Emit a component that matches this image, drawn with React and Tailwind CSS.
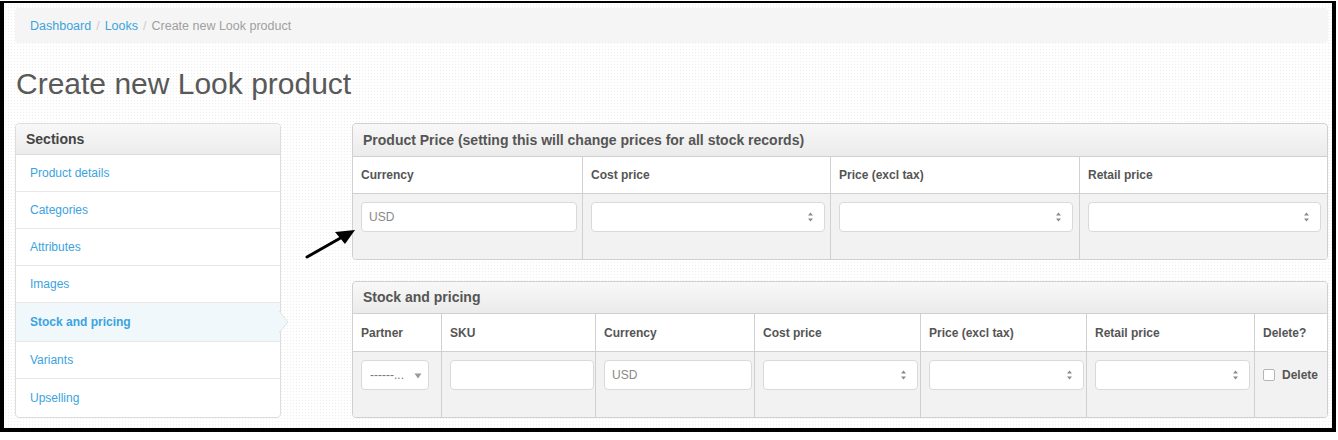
import React from "react";

const FONT = { fontFamily: '"Liberation Sans", Arial, Helvetica, sans-serif' };

function Spinner() {
  return (
    <svg width="7" height="12" viewBox="0 0 7 12" className="absolute right-[10px] top-1/2 -translate-y-1/2">
      <path d="M3.5 1.5 L6 4.5 L1 4.5 Z" fill="#8a8a8a" />
      <path d="M3.5 10.5 L6 7.5 L1 7.5 Z" fill="#8a8a8a" />
    </svg>
  );
}

function TextBox({ value, className = "" }) {
  return (
    <div className={`h-[30px] bg-white border border-[#d9d9d9] rounded-[4px] flex items-center px-[7px] text-[12px] text-[#888] ${className}`}>
      {value}
    </div>
  );
}

function NumberBox({ className = "" }) {
  return (
    <div className={`relative h-[30px] bg-white border border-[#d9d9d9] rounded-[4px] ${className}`}>
      <Spinner />
    </div>
  );
}

function SelectBox() {
  return (
    <div className="relative h-[30px] w-[68px] bg-white border border-[#d9d9d9] rounded-[4px] flex items-center pl-[8px] text-[12px] text-[#777]">
      ------...
      <svg width="8" height="6" viewBox="0 0 8 6" className="absolute right-[6px] top-[12px]">
        <path d="M0.5 0.5 L7.5 0.5 L4 5.5 Z" fill="#9a9a9a" />
      </svg>
    </div>
  );
}

function PanelHeader({ children, h = "h-[33px]" }) {
  return (
    <div className={`${h} flex items-center px-[10px] bg-gradient-to-b from-[#f8f8f8] to-[#ebebeb] border-b border-[#d0d0d0] rounded-t-[4px]`}>
      <span className="text-[14px] font-bold text-[#555]">{children}</span>
    </div>
  );
}

const sections = [
  "Product details",
  "Categories",
  "Attributes",
  "Images",
  "Stock and pricing",
  "Variants",
  "Upselling",
];

export default function App() {
  const priceCols = [
    { label: "Currency", w: "w-[230px]", cell: <TextBox value="USD" className="w-[216px]" /> },
    { label: "Cost price", w: "w-[248px]", cell: <NumberBox className="w-[234px]" /> },
    { label: "Price (excl tax)", w: "w-[249px]", cell: <NumberBox className="w-[234px]" /> },
    { label: "Retail price", w: "flex-1", cell: <NumberBox className="w-[233px]" /> },
  ];

  const stockCols = [
    { label: "Partner", w: "w-[89px]", cell: <SelectBox /> },
    { label: "SKU", w: "w-[154px]", cell: <TextBox value="" className="w-[144px]" /> },
    { label: "Currency", w: "w-[159px]", cell: <TextBox value="USD" className="w-[148px]" /> },
    { label: "Cost price", w: "w-[166px]", cell: <NumberBox className="w-[155px]" /> },
    { label: "Price (excl tax)", w: "w-[166px]", cell: <NumberBox className="w-[155px]" /> },
    { label: "Retail price", w: "w-[168px]", cell: <NumberBox className="w-[155px]" /> },
    {
      label: "Delete?",
      w: "flex-1",
      cell: (
        <div className="h-[30px] flex items-center gap-[7px]">
          <div className="w-[12px] h-[12px] bg-white border border-[#b5b5b5] rounded-[2px]" />
          <span className="text-[12px] font-bold text-[#555]">Delete</span>
        </div>
      ),
    },
  ];

  return (
    <div style={FONT} className="w-[1338px] h-[440px] bg-white pt-[1px]">
      <div className="relative w-[1336px] h-[431px] border-l-4 border-r-4 border-b-4 border-t-2 border-black bg-white bg-[radial-gradient(#eeeeee_0.8px,transparent_0.8px)] bg-[size:3px_3px] pl-[11px] pr-[4px] pt-[5px]">
        {/* breadcrumb */}
        <div className="h-[35px] w-[1313px] bg-[#f5f5f5] rounded-[4px] flex items-center px-[15px] pt-[1px] text-[12.5px]">
          <span className="text-[#3ba3de]">Dashboard</span>
          <span className="text-[#ccc] px-[5px]">/</span>
          <span className="text-[#3ba3de]">Looks</span>
          <span className="text-[#ccc] px-[5px]">/</span>
          <span className="text-[#a0a0a0]">Create new Look product</span>
        </div>

        <h1 className="mt-[21px] ml-[1px] text-[30px] leading-[40px] text-[#595959] font-normal">
          Create new Look product
        </h1>

        <div className="mt-[19px] flex">
          {/* sections nav */}
          <div className="relative w-[266px] border border-[#ddd] rounded-[4px] bg-white">
            <div className="h-[31px] flex items-center px-[10px] bg-gradient-to-b from-[#f8f8f8] to-[#ececec] border-b border-[#ddd] rounded-t-[4px]">
              <span className="text-[14px] font-bold text-[#444]">Sections</span>
            </div>
            {sections.map((s, i) => {
              const active = s === "Stock and pricing";
              return (
                <div
                  key={s}
                  className={`relative flex items-center px-[14px] text-[12px] ${
                    i < sections.length - 1 ? "border-b border-[#e8e8e8]" : ""
                  } ${active ? "h-[39px] bg-[#f1f8fc] font-bold" : "h-[37px]"}`}
                >
                  <span className="text-[#3ba3de]">{s}</span>
                  {active && (
                    <svg width="10" height="22" viewBox="0 0 10 22" className="absolute right-[-9px] top-1/2 -translate-y-1/2">
                      <path d="M0 0 L9 11 L0 22 Z" fill="#f1f8fc" />
                      <path d="M0 0 L9 11 L0 22" fill="none" stroke="#e2e2e2" strokeWidth="1" />
                    </svg>
                  )}
                </div>
              );
            })}
          </div>

          <div className="ml-[71px] w-[976px] flex flex-col">
            {/* product price panel */}
            <div className="border border-[#d0d0d0] rounded-[4px] overflow-hidden">
              <PanelHeader>Product Price (setting this will change prices for all stock records)</PanelHeader>
              <div className="flex bg-white h-[37px] border-b border-[#d0d0d0]">
                {priceCols.map((c, i) => (
                  <div
                    key={c.label}
                    className={`${c.w} flex items-center px-[8px] text-[12px] font-bold text-[#555] ${
                      i < priceCols.length - 1 ? "border-r border-[#d0d0d0]" : ""
                    }`}
                  >
                    {c.label}
                  </div>
                ))}
              </div>
              <div className="flex bg-[#f2f2f2] h-[65px]">
                {priceCols.map((c, i) => (
                  <div
                    key={c.label}
                    className={`${c.w} pt-[8px] px-[8px] ${
                      i < priceCols.length - 1 ? "border-r border-[#d0d0d0]" : ""
                    }`}
                  >
                    {c.cell}
                  </div>
                ))}
              </div>
            </div>

            {/* stock and pricing panel */}
            <div className="mt-[21px] border border-[#d0d0d0] rounded-[4px] overflow-hidden">
              <PanelHeader h="h-[32px]">Stock and pricing</PanelHeader>
              <div className="flex bg-white h-[38px] border-b border-[#d0d0d0]">
                {stockCols.map((c, i) => (
                  <div
                    key={c.label}
                    className={`${c.w} flex items-center px-[8px] text-[12px] font-bold text-[#555] ${
                      i < stockCols.length - 1 ? "border-r border-[#d0d0d0]" : ""
                    }`}
                  >
                    {c.label}
                  </div>
                ))}
              </div>
              <div className="flex bg-[#f2f2f2] h-[65px]">
                {stockCols.map((c, i) => (
                  <div
                    key={c.label}
                    className={`${c.w} pt-[8px] px-[8px] ${
                      i < stockCols.length - 1 ? "border-r border-[#d0d0d0]" : ""
                    }`}
                  >
                    {c.cell}
                  </div>
                ))}
              </div>
            </div>
          </div>
        </div>

        {/* pointer arrow */}
        <svg
          width="60"
          height="40"
          viewBox="0 0 60 40"
          className="absolute left-[296px] top-[219px] pointer-events-none"
        >
          <line x1="7" y1="35" x2="44" y2="14" stroke="#000" strokeWidth="3" strokeLinecap="round" />
          <path d="M55 8 L35 10 L45 22 Z" fill="#000" />
        </svg>
      </div>
    </div>
  );
}
